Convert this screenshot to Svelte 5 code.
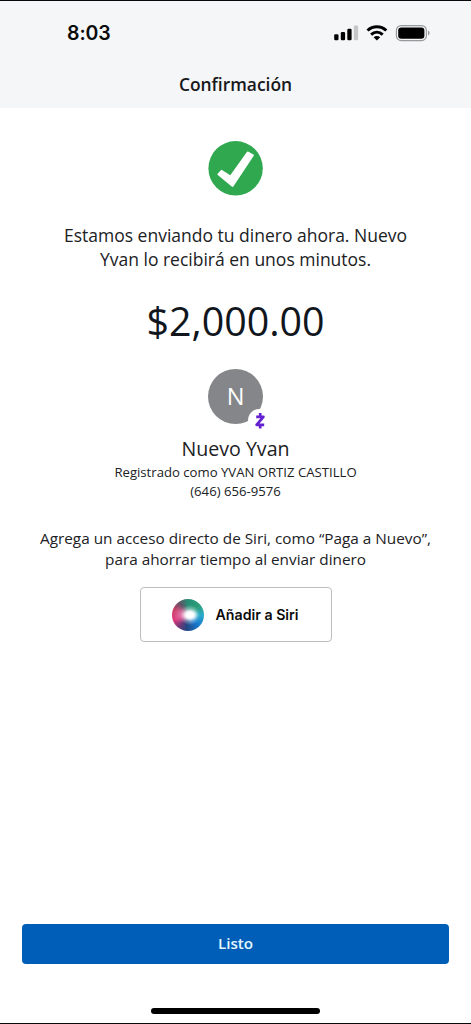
<script lang="ts">
	export let time: string = '8:03';
	export let title: string = 'Confirmación';
	export let amount: string = '$2,000.00';
	export let recipient = {
		initial: 'N',
		name: 'Nuevo Yvan',
		registered: 'Registrado como YVAN ORTIZ CASTILLO',
		phone: '(646) 656-9576'
	};
</script>

<div class="screen">
	<header class="header">
		<div class="status-bar">
			<span class="time">{time}</span>
			<svg class="status-icons" width="98" height="20" viewBox="0 0 98 20" aria-hidden="true">
				<rect x="2.2" y="11.2" width="4.3" height="6" rx="1.2" />
				<rect x="8.8" y="9" width="4.3" height="8.2" rx="1.2" />
				<rect x="15.3" y="5.8" width="4.3" height="11.4" rx="1.2" />
				<rect x="21.8" y="2.6" width="4.3" height="14.6" rx="1.2" fill="#c5c6c8" />
				<g fill="none" stroke="#000" stroke-width="3">
					<path d="M35.5 7.5c5.4-5 13.4-5 18.8 0" />
					<path d="M39.1 11.6c3.4-3.1 8.2-3.1 11.6 0" />
				</g>
				<path d="M41.6 14.2c2-1.7 4.6-1.7 6.6 0l-3.3 3.4z" />
				<rect x="64.4" y="2.6" width="30" height="15" rx="4.8" fill="none" stroke="#98999b" stroke-width="1.2" />
				<rect x="66.2" y="4.4" width="26.2" height="11.4" rx="3.2" />
				<path d="M96 7.6c2 .8 2 4.2 0 5z" fill="#98999b" />
			</svg>
		</div>
		<h1 class="title">{title}</h1>
	</header>

	<main class="content">
		<svg class="check" width="55" height="56" viewBox="0 0 55 56" aria-hidden="true">
			<circle cx="27.6" cy="28.3" r="27.2" fill="#2fa84f" />
			<path
				d="M10.3 34.4l3.2-3.6 9 5.6L39.6 12.4l5.4 2.8L24.6 46z"
				fill="#fff"
				stroke="#fff"
				stroke-width="1.8"
				stroke-linejoin="round"
			/>
		</svg>

		<p class="message">Estamos enviando tu dinero ahora. Nuevo<br />Yvan lo recibirá en unos minutos.</p>
		<p class="amount">{amount}</p>

		<div class="avatar">
			{recipient.initial}
			<span class="badge">
				<svg width="12" height="18" viewBox="0 0 12 18" aria-hidden="true">
					<path
						d="M6.2 1v3M2.2 4.8h7.2L2.6 12.8h7.6M6.2 13v3.6"
						fill="none"
						stroke="#6421cf"
						stroke-width="2.7"
						stroke-linejoin="round"
					/>
				</svg>
			</span>
		</div>

		<h2 class="name">{recipient.name}</h2>
		<p class="registered">{recipient.registered}</p>
		<p class="phone">{recipient.phone}</p>

		<p class="siri-hint">Agrega un acceso directo de Siri, como “Paga a Nuevo”,<br />para ahorrar tiempo al enviar dinero</p>

		<button class="siri-button">
			<span class="siri-orb"></span>
			<span class="siri-label">Añadir a Siri</span>
		</button>
	</main>

	<footer class="footer">
		<button class="done">Listo</button>
		<div class="home-indicator"></div>
	</footer>
</div>

<style>
	:global(body) {
		margin: 0;
		background: #fff;
	}

	.screen {
		display: flex;
		flex-direction: column;
		box-sizing: border-box;
		width: 471px;
		height: 1024px;
		border-top: 1px solid #08090c;
		border-bottom: 1px solid #08090c;
		background: #fff;
		color: #202124;
		font-family: 'Open Sans', sans-serif;
		white-space: nowrap;
	}

	p,
	h1,
	h2 {
		margin: 0;
		font-weight: 400;
	}

	button {
		border: 0;
		padding: 0;
		font: inherit;
	}

	/* Header */
	.header {
		height: 107px;
		background: #f5f6f8;
		text-align: center;
	}

	.status-bar {
		display: flex;
		align-items: center;
		justify-content: space-between;
		height: 64px;
		padding: 0 41px 0 67px;
	}

	.time {
		color: #0b0b0c;
		font-family: Inter, sans-serif;
		font-size: 19.5px;
		font-weight: 600;
		letter-spacing: -0.1px;
	}

	.title {
		color: #17181b;
		font-size: 17.4px;
		font-weight: 600;
		line-height: 38px;
	}

	/* Content */
	.content {
		display: flex;
		flex: 1;
		flex-direction: column;
		align-items: center;
		padding-top: 32px;
		text-align: center;
	}

	.message {
		margin-top: 27px;
		font-size: 17.5px;
		line-height: 24px;
	}

	.amount {
		margin-top: 22px;
		color: #11161d;
		font-size: 39.4px;
		line-height: 56px;
	}

	.avatar {
		position: relative;
		width: 55px;
		height: 55px;
		margin-top: 20px;
		border-radius: 50%;
		background: #858689;
		color: #fff;
		font-size: 23.5px;
		line-height: 55px;
	}

	.badge {
		position: absolute;
		top: 40px;
		left: 40px;
		display: flex;
		align-items: center;
		justify-content: center;
		width: 23px;
		height: 23px;
		border-radius: 50%;
		background: #fff;
	}

	.name {
		margin-top: 12px;
		font-size: 19.6px;
		line-height: 26px;
	}

	.registered,
	.phone {
		font-size: 13.15px;
		line-height: 19px;
	}

	.registered {
		margin-top: 1px;
	}

	.siri-hint {
		margin-top: 27px;
		font-size: 15.32px;
		line-height: 21px;
	}

	.siri-button {
		display: flex;
		align-items: center;
		box-sizing: border-box;
		width: 192px;
		height: 55px;
		margin-top: 17px;
		padding-left: 31px;
		border: 1.5px solid #bdbdbf;
		border-radius: 4px;
		background: #fff;
	}

	.siri-orb {
		width: 32px;
		height: 32px;
		border-radius: 50%;
		background:
			radial-gradient(ellipse 8px 6px at 56% 50%, #fff 40%, transparent),
			radial-gradient(circle at 56% 50%, rgba(240, 248, 255, 0.8) 10%, transparent 42%),
			radial-gradient(circle at 30% 48%, rgba(226, 140, 190, 0.75), transparent 32%),
			conic-gradient(from 0deg, #258e77, #2c9e78 50deg, #2bacc9 90deg, #1679cf 135deg, #234783 185deg, #693978 215deg, #de397c 250deg, #cc3c67 290deg, #615465 325deg, #258e77);
	}

	.siri-label {
		margin-left: 12px;
		color: #0b0b0c;
		font-family: Inter, sans-serif;
		font-size: 14.2px;
		font-weight: 600;
	}

	/* Footer */
	.footer {
		display: flex;
		flex-direction: column;
		align-items: center;
		padding: 0 22px 9px;
	}

	.done {
		width: 427px;
		height: 40px;
		padding-bottom: 2px;
		border-radius: 4px;
		background: #005eb8;
		color: #e4f7ff;
		font-size: 15.2px;
		font-weight: 600;
	}

	.home-indicator {
		width: 169px;
		height: 6px;
		margin-top: 44px;
		border-radius: 3px;
		background: #000;
	}
</style>
